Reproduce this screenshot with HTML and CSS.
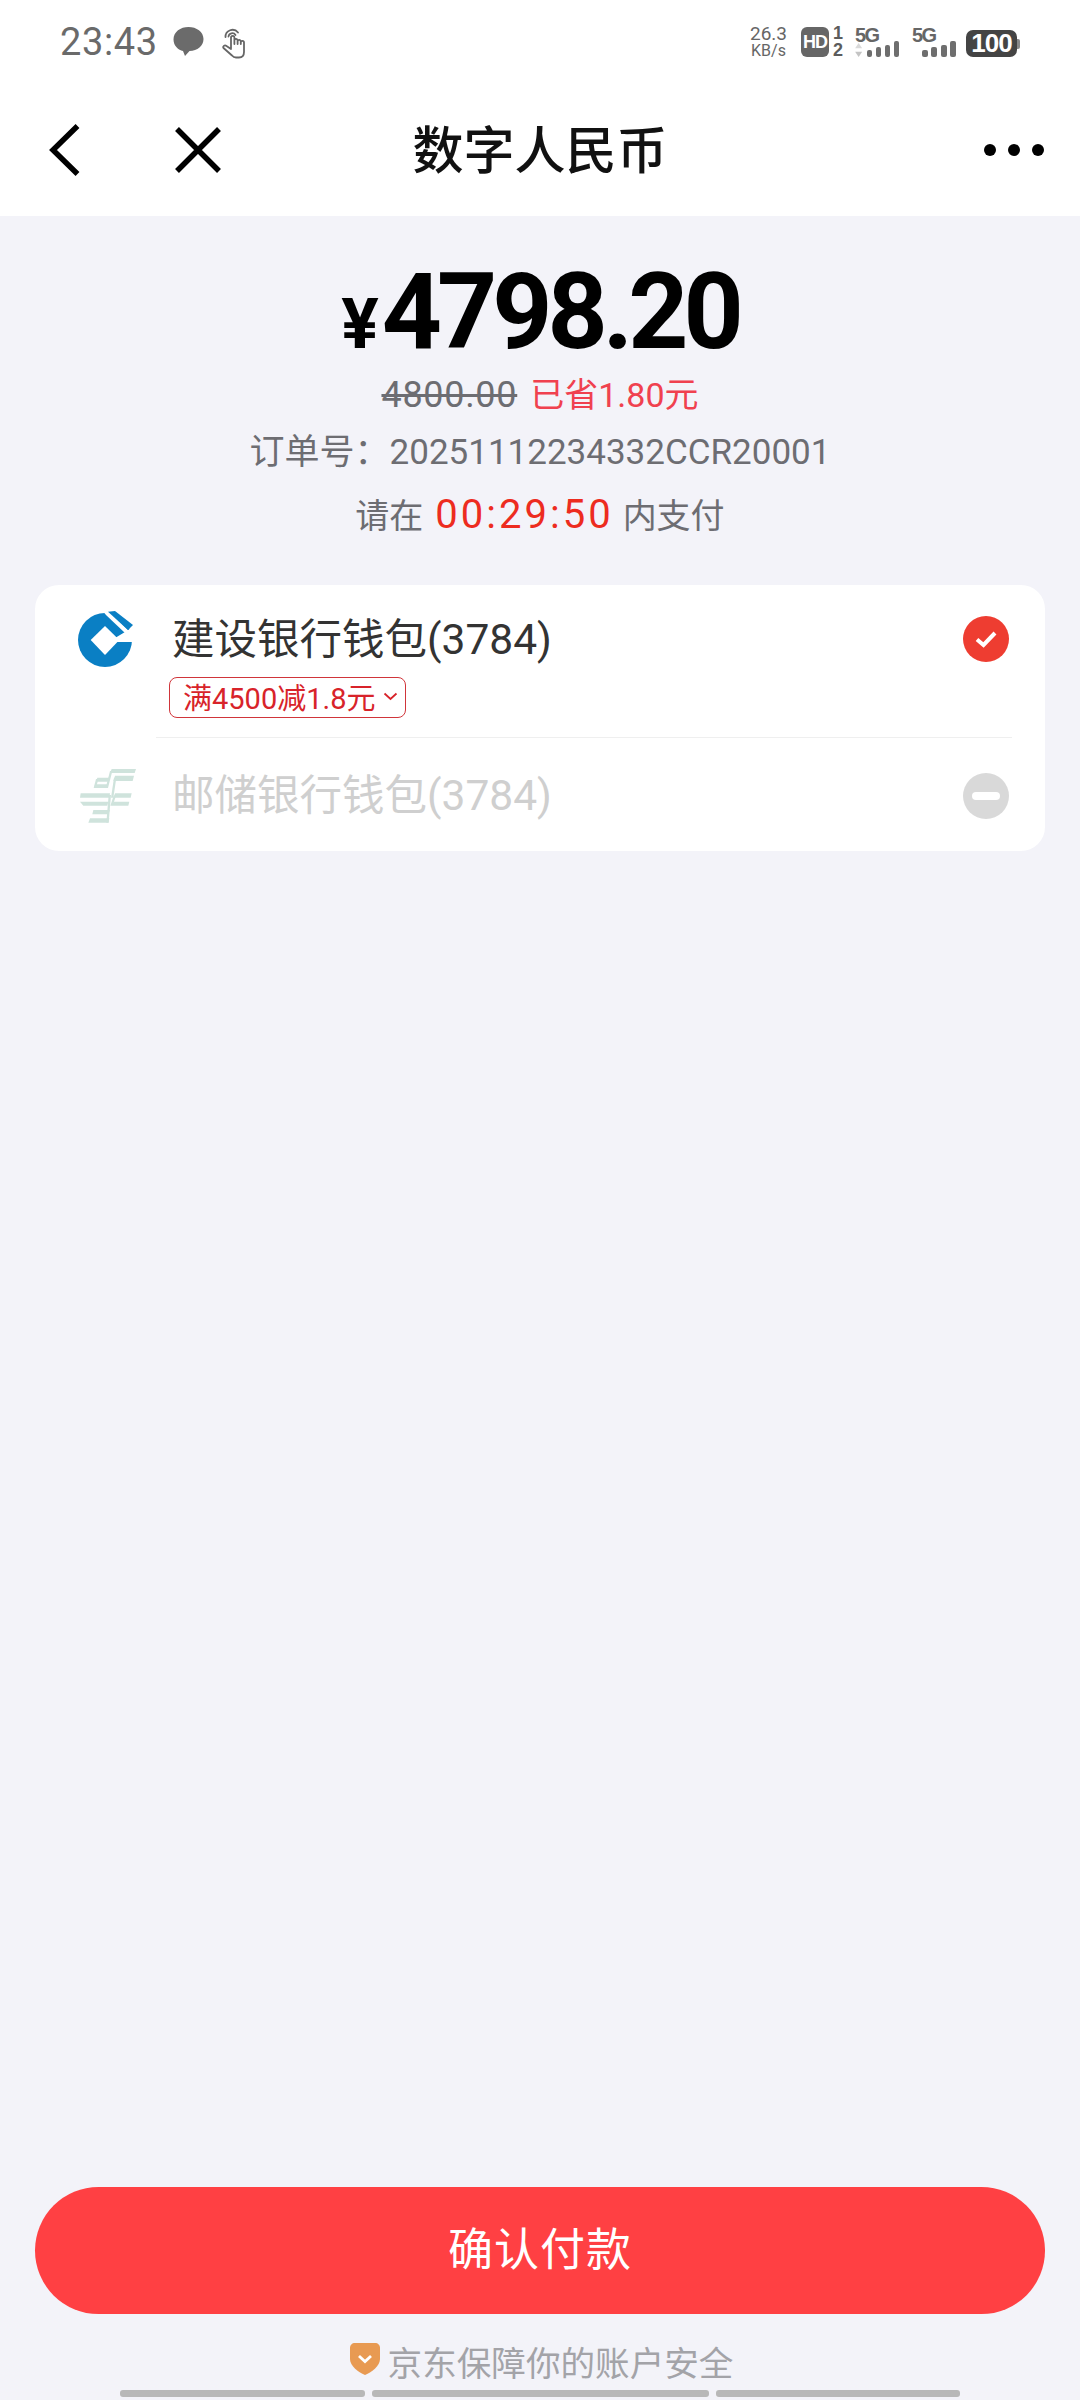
FILE: index.html
```html
<!DOCTYPE html>
<html lang="zh-CN">
<head>
<meta charset="utf-8">
<title>数字人民币</title>
<link rel="stylesheet" href="styles.css">
</head>
<body>
<div class="page">
  <header class="top">
    <div class="status">
      <div class="status-left">
        <span class="time">23:43</span>
        <svg class="ic-chat" viewBox="0 0 30 30"><path d="M15 0C7 0 0 4.800 0 12.500 0 19 5 23 9.500 24l2 5 4.500-5C24 23.800 30 19 30 12 30 4.800 23 0 15 0Z" fill="#6b6b6b"/></svg>
        <svg class="ic-touch" viewBox="0 0 26 32" fill="none" stroke="#666" stroke-width="1.800" stroke-linecap="round" stroke-linejoin="round"><path d="M3.500 10A7 7 0 0 1 16 5.500"/><path d="M6.500 9.500A3.800 3.800 0 0 1 13.500 8"/><path d="M9 21V10.500a1.700 1.700 0 0 1 3.400 0V17l0-3.500a1.600 1.600 0 0 1 3.200 0V17v-2.500a1.600 1.600 0 0 1 3.200 0V17v-1.500a1.600 1.600 0 0 1 3.200 0V25c0 3.500-2 5.500-5 5.500h-3c-2 0-3-.8-4-2L1.500 21c-1-1.500 1-3.500 3-2L9 22"/></svg>
      </div>
      <div class="status-right">
        <div class="speed"><span>26.3</span><span class="speed-unit">KB/s</span></div>
        <div class="hd-wrap"><span class="hd">HD</span><div class="hd-nums"><span>1</span><span>2</span></div></div>
        <div class="sig sig-a"><span class="sig-label">5G</span><div class="sig-row"><svg class="arrows" viewBox="0 0 8 16"><path d="M4 0 8 6H0Z" fill="#d9d9d9"/><path d="M4 16 8 10H0Z" fill="#c4c4c4"/></svg><i class="b1"></i><i class="b2"></i><i class="b3"></i><i class="b4"></i></div></div>
        <div class="sig sig-b"><span class="sig-label">5G</span><div class="sig-row"><i class="b1"></i><i class="b2"></i><i class="b3"></i><i class="b4"></i></div></div>
        <div class="battery"><span class="battery-body">100</span><span class="battery-tip"></span></div>
      </div>
    </div>
    <nav class="nav">
      <svg class="ic-back" viewBox="0 0 31 54" fill="none" stroke="#000" stroke-width="5.500"><path d="M28.500 3 4 27l24.500 24"/></svg>
      <svg class="ic-close" viewBox="0 0 48 48" fill="none" stroke="#000" stroke-width="5.500"><path d="M3 3l42 42M45 3 3 45"/></svg>
      <h1 class="title">数字人民币</h1>
      <div class="dots"><i></i><i></i><i></i></div>
    </nav>
  </header>

  <main class="main">
    <section class="summary">
      <div class="amount"><span class="yen">¥</span>4798.20</div>
      <div class="saved"><s class="orig">4800.00</s><span class="save-red">已省1.80元</span></div>
      <div class="order">订单号：20251112234332CCR20001</div>
      <div class="deadline">请在<span class="count">00:29:50</span>内支付</div>
    </section>

    <section class="card">
      <div class="row row-ccb">
        <svg class="bank" viewBox="0 0 56 56">
          <circle cx="27" cy="29" r="27" fill="#0a7fc4"/>
          <path d="M24 -1 31 0 51 20 47 22 28 4Z" fill="#fff"/>
          <path d="M37 27 47 21 56 15 58 31H38Z" fill="#fff"/>
          <path d="M27 15 41.300 29 27 44 12.700 29Z" fill="#fff"/>
          <path d="M30 .7 37 0 55 14 50 19Z" fill="#0a7fc4"/>
        </svg>
        <div class="row-body">
          <div class="bank-name">建设银行钱包(3784)</div>
          <div class="coupon"><span>满4500减1.8元</span><svg class="chev" viewBox="0 0 15 9" fill="none" stroke="#d8232a" stroke-width="1.800"><path d="M1.500 1.500l6 5.500 6-5.500"/></svg></div>
        </div>
        <svg class="tick" viewBox="0 0 46 46"><circle cx="23" cy="23" r="23" fill="#ee3d31"/><path d="M14 23.500l6.500 5.500L32 17" fill="none" stroke="#fff" stroke-width="4"/></svg>
      </div>
      <div class="divider"></div>
      <div class="row row-psbc">
        <svg class="bank-post" viewBox="54 42 174 162" fill="#cfe3dc">
          <path d="M155 42H228L224 54H150Z"/>
          <path d="M165 62H222L218 78H160Z"/>
          <path d="M112 68H150L145 80H108Z"/>
          <path d="M105 88H145L141 99H102Z"/>
          <path d="M62 115H150L148 128H60Z"/>
          <path d="M165 115H215L212 128H160Z"/>
          <path d="M60 140H145L142 152H70Z"/>
          <path d="M160 140H208L205 152H157Z"/>
          <path d="M100 165H150L145 178H97Z"/>
          <path d="M90 190H148L145 203H85Z"/>
          <path d="M150 48 157 48 144 99 137 99Z"/>
          <path d="M162 68 169 68 160 128 153 128Z"/>
          <path d="M108 72 115 72 108 99 101 99Z"/>
          <path d="M146 120 153 120 146 203 139 203Z"/>
          <path d="M161 122 168 122 158 152 151 152Z"/>
        </svg>
        <div class="bank-name muted">邮储银行钱包(3784)</div>
        <svg class="tick" viewBox="0 0 46 46"><circle cx="23" cy="23" r="23" fill="#d9d9d9"/><rect x="9" y="19" width="28" height="8" rx="4" fill="#fff"/></svg>
      </div>
    </section>
  </main>

  <footer class="foot">
    <button class="pay" type="button">确认付款</button>
    <div class="assure">
      <svg class="shield" viewBox="0 0 30 32"><path d="M5 0h20c3 0 5 2 5 5v11c0 7-8 13-15 16C8 29 0 23 0 16V5c0-3 2-5 5-5Z" fill="#e89a52"/><path d="M9 13l6 5.500L21 13" fill="none" stroke="#fff" stroke-width="2.800"/></svg>
      <span>京东保障你的账户安全</span>
    </div>
    <div class="handles"><i class="h1"></i><i class="h2"></i><i class="h3"></i></div>
  </footer>
</div>
</body>
</html>
```
FILE: styles.css
```css
* { box-sizing: border-box; }
html, body { margin: 0; padding: 0; }
body {
  width: 1080px;
  height: 2400px;
  overflow: hidden;
  font-family: Roboto, "Noto Sans CJK SC", sans-serif;
  background: #f3f3f9;
}
.page { height: 2400px; display: flex; flex-direction: column; }

.top { background: #fff; height: 216px; flex: none; }
.status { height: 84px; display: flex; justify-content: space-between; padding: 24px 0 0 60px; }
.status-left { display: flex; align-items: flex-start; }
.time { font-size: 38px; line-height: 36px; color: #6a6a6a; width: 113px; letter-spacing: .6px; }
.ic-chat { width: 31px; height: 30px; margin: 3px 0 0 0; }
.ic-touch { width: 26px; height: 32px; margin: 3px 0 0 18px; }
.status-right { display: flex; align-items: flex-start; padding-right: 60px; }
.speed { display: flex; flex-direction: column; align-items: center; width: 37px; color: #666; font-size: 19px; line-height: 19px; }
.speed-unit { font-size: 16px; line-height: 16px; }
.hd-wrap { display: flex; margin-left: 14px; width: 42px; }
.hd { width: 30px; height: 30px; margin-top: 3px; background: #666; color: #fff; border-radius: 6px; font: bold 18px/30px "Liberation Sans", sans-serif; text-align: center; letter-spacing: -1px; }
.hd-nums { display: flex; flex-direction: column; margin-left: 4px; font: bold 18px/17px "Liberation Sans", sans-serif; color: #5c5c5c; padding-top: 1px; }
.sig { display: flex; flex-direction: column; width: 44px; margin: 3px 0 0 12px; }
.sig-b { margin-left: 13px; }
.sig-label { font: bold 20px/16px "Liberation Sans", sans-serif; color: #666; height: 16px; letter-spacing: -1.500px; }
.sig-row { display: flex; align-items: flex-end; gap: 3.500px; height: 15px; margin-top: -1px; justify-content: flex-end; }
.arrows { width: 8px; height: 14px; margin-right: 1px; align-self: center; }
.sig-row i { width: 6px; background: #6e6e6e; border-radius: 2px; display: block; }
.sig-row .b1 { height: 7px; }
.sig-row .b2 { height: 10px; }
.sig-row .b3 { height: 12px; }
.sig-row .b4 { height: 16px; }
.battery { display: flex; align-items: center; margin: 6px 0 0 10px; }
.battery-body { width: 51px; height: 27px; background: #444; color: #fff; border-radius: 7px; font: bold 26px/27px "Liberation Sans", sans-serif; text-align: center; letter-spacing: -1px; }
.battery-tip { width: 3px; height: 10px; background: #888; border-radius: 0 2px 2px 0; }

.nav { position: relative; height: 132px; display: flex; align-items: center; padding: 0 0 0 49px; }
.ic-back { width: 31px; height: 54px; flex: none; }
.ic-close { width: 48px; height: 48px; margin-left: 94px; flex: none; }
.title { position: absolute; left: 0; right: 0; margin: 0; text-align: center; font-size: 51px; line-height: 60px; font-weight: 500; color: #111; top: 38px; }
.dots { margin-left: auto; margin-right: 36px; display: flex; gap: 12px; }
.dots i { width: 12px; height: 12px; border-radius: 50%; background: #000; display: block; }

.main { flex: 1; padding: 0 35px; }
.summary { display: flex; flex-direction: column; align-items: center; color: #6d6d72; }
.amount { font-family: Roboto, sans-serif; font-weight: 700; font-size: 105px; line-height: 104px; color: #000; margin-top: 45px; letter-spacing: -5px; height: 104px; }
.yen { font-size: 70px; line-height: 1; letter-spacing: 0; margin-right: 3px; }
.saved { display: flex; align-items: baseline; gap: 13px; height: 40px; line-height: 40px; margin-top: 10px; }
.orig { font-size: 36px; letter-spacing: .7px; color: #6d6d72; }
.save-red { font-size: 34px; color: #f0414f; }
.order { font-size: 35px; line-height: 40px; margin-top: 18px; }
.deadline { display: flex; align-items: baseline; gap: 12px; font-size: 34px; height: 44px; line-height: 44px; margin-top: 20px; }
.count { color: #ed2c1f; font-size: 40px; line-height: 44px; letter-spacing: 3px; margin-right: -3px; }

.card { margin-top: 48px; background: #fff; border-radius: 24px; height: 266px; overflow: hidden; }
.row { display: flex; align-items: flex-start; padding: 0 36px 0 43px; }
.row-ccb { height: 152px; padding-top: 26px; }
.row-psbc { height: 113px; padding-top: 31px; }
.bank { width: 56px; height: 56px; flex: none; }
.bank-post { width: 58px; height: 54px; flex: none; }
.row-body { flex: 1; margin: 1px 0 0 38px; }
.bank-name { flex: 1; font-size: 42.500px; line-height: 56px; color: #333; }
.row-psbc .bank-name { margin: -1px 0 0 36px; }
.muted { color: #cfcfcf; }
.coupon { display: inline-flex; align-items: center; gap: 8px; height: 41px; margin: 9px 0 0 -3px; padding: 0 7px 3px 13px; border: 1.500px solid #d0353a; border-radius: 8px; color: #d8232a; font-size: 29px; }
.chev { width: 15px; height: 9px; }
.tick { width: 46px; height: 46px; flex: none; margin-top: 5px; }
.row-psbc .tick { margin-top: 4px; }
.divider { height: 1px; background: #efefef; margin: 0 33px 0 121px; }

.foot { flex: none; padding: 0 35px; position: relative; height: 213px; }
.pay { display: block; width: 1010px; height: 127px; border: 0; border-radius: 64px; background: #ff4043; color: #fff; font-family: inherit; font-size: 45px; letter-spacing: 1px; padding: 0 0 8px; }
.assure { display: flex; justify-content: center; align-items: center; height: 40px; margin-top: 27px; padding-left: 3px; color: #a3a3a8; font-size: 34.600px; gap: 8px; }
.shield { width: 30px; height: 32px; flex: none; margin-top: -4px; }
.handles { position: absolute; left: 120px; top: 203px; display: flex; gap: 7px; }
.handles i { display: block; height: 7px; background: #b8b8b8; border-radius: 3px; }
.h1 { width: 245px; }
.h2 { width: 337px; }
.h3 { width: 244px; }
```
